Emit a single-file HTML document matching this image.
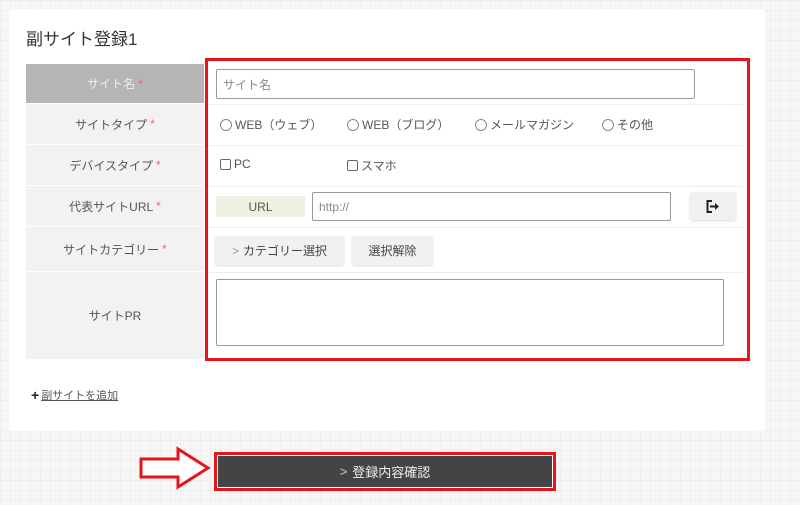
<!DOCTYPE html>
<html><head><meta charset="utf-8"><style>
*{box-sizing:border-box;margin:0;padding:0}
body{width:800px;height:505px;overflow:hidden;background:#f6f6f6;background-image:linear-gradient(#eeeeee 1px,transparent 1px),linear-gradient(90deg,#eeeeee 1px,transparent 1px);background-size:10px 10px;font-family:"Liberation Sans","Noto Sans CJK JP",sans-serif;color:#444;position:relative}
.a{position:absolute}
.card{left:9px;top:9px;width:756px;height:422px;background:#fff;border-radius:3px}
.lab{left:26px;width:178px;background:#f2f2f2;font-size:12px;text-align:center;border-bottom:1px solid #fff;display:flex;align-items:center;justify-content:center;color:#555}
.lab i{color:#e66;font-style:normal;margin-left:3px}
.line{left:204px;width:541px;height:1px;background:#eee}
.inp{border:1px solid #999;border-radius:2px;background:#fff;font-size:12px;color:#888;padding-left:6px;display:flex;align-items:center}
.t{font-size:12px;color:#555;display:flex;align-items:center}
.rd{width:12px;height:12px;border:1px solid #888;border-radius:50%;margin-right:3px;display:inline-block}
.cb{width:11px;height:11px;border:1px solid #666;border-radius:2px;margin-right:3px;display:inline-block}
.btn{background:#f1f1f1;border-radius:3px;box-shadow:0 1px 2px rgba(0,0,0,.15);font-size:12px;color:#444;display:flex;align-items:center;justify-content:center}
</style></head><body>
<div class="a card"></div>
<div class="a" style="left:26px;top:25px;font-size:17px;color:#333">副サイト登録1</div>

<div class="a lab" style="top:64px;height:40px;background:#b5b5b5;color:#eee">サイト名<i>*</i></div>
<div class="a lab" style="top:104px;height:41px">サイトタイプ<i>*</i></div>
<div class="a lab" style="top:145px;height:41px">デバイスタイプ<i>*</i></div>
<div class="a lab" style="top:186px;height:41px">代表サイトURL<i>*</i></div>
<div class="a lab" style="top:227px;height:45px">サイトカテゴリー<i>*</i></div>
<div class="a lab" style="top:272px;height:88px">サイトPR</div>
<div class="a line" style="top:104px"></div>
<div class="a line" style="top:145px"></div>
<div class="a line" style="top:186px"></div>
<div class="a line" style="top:227px"></div>
<div class="a line" style="top:272px"></div>

<div class="a inp" style="left:216px;top:69px;width:479px;height:30px">サイト名</div>
<div class="a t" style="left:220px;top:116px"><span class="rd"></span>WEB（ウェブ）</div>
<div class="a t" style="left:347px;top:116px"><span class="rd"></span>WEB（ブログ）</div>
<div class="a t" style="left:475px;top:116px"><span class="rd"></span>メールマガジン</div>
<div class="a t" style="left:602px;top:116px"><span class="rd"></span>その他</div>
<div class="a t" style="left:220px;top:157px"><span class="cb"></span>PC</div>
<div class="a t" style="left:347px;top:157px"><span class="cb"></span>スマホ</div>

<div class="a t" style="left:216px;top:196px;width:89px;height:21px;background:#efefe2;justify-content:center">URL</div>
<div class="a inp" style="left:312px;top:192px;width:359px;height:29px">http://</div>
<div class="a btn" style="left:690px;top:192px;width:46px;height:28px"><svg width="14" height="13" viewBox="0 0 14 13"><path d="M6 1H1.5v11H6" fill="none" stroke="#222" stroke-width="2"/><path d="M4 5.5h5V3l4 3.5-4 3.5V7.5H4z" fill="#222"/></svg></div>
<div class="a btn" style="left:215px;top:236px;width:129px;height:29px"><span style="color:#999;margin-right:4px">&gt;</span>カテゴリー選択</div>
<div class="a btn" style="left:352px;top:236px;width:81px;height:29px">選択解除</div>
<div class="a inp" style="left:216px;top:279px;width:508px;height:67px"></div>

<div class="a" style="left:205px;top:58px;width:545px;height:303px;border:3px solid #e8141c"></div>

<div class="a t" style="left:31px;top:387px;font-size:11px"><b style="font-size:14px;color:#222;margin-right:2px">+</b><span style="text-decoration:underline">副サイトを追加</span></div>

<svg class="a" style="left:138px;top:446px" width="74" height="44" viewBox="0 0 74 44"><path d="M3 13H40V3L70 22 40 41V31H3Z" fill="#fff" stroke="#e8141c" stroke-width="3" stroke-linejoin="miter"/></svg>
<div class="a" style="left:214px;top:452px;width:342px;height:39px;border:3px solid #e8141c;background:#fff;padding:1px">
<div style="width:100%;height:100%;background:#444;color:#eee;font-size:13px;display:flex;align-items:center;justify-content:center"><span style="margin-right:5px;color:#ccc">&gt;</span>登録内容確認</div></div>
</body></html>
